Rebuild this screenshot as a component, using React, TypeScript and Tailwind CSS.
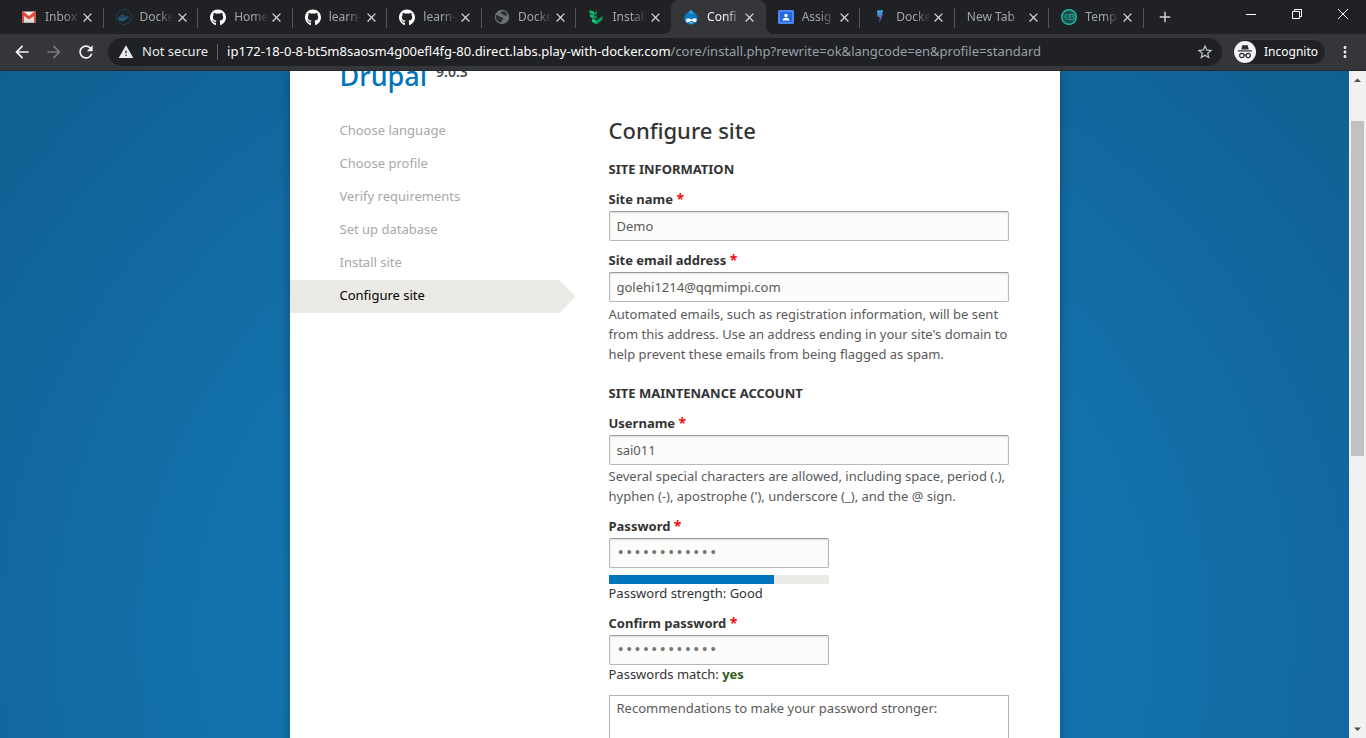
import { useState } from "react";
import type { ReactNode } from "react";
import {
  MdArrowBack,
  MdArrowForward,
  MdRefresh,
  MdWarning,
  MdStarBorder,
  MdMoreVert,
  MdClose,
  MdAdd,
} from "react-icons/md";
import { FaGithub, FaDocker } from "react-icons/fa";

function GmailIcon() {
  return (
    <svg viewBox="0 0 16 16" className="size-4">
      <path d="M1 2.500h14v11H1z" fill="#f1f1f1" />
      <path d="M3 13.500V6l5 4 5-4v7.500z" fill="#dcdcdc" />
      <path d="M1 2.500h1.500L8 7l5.500-4.500H15v3L8 10.500 1 5.500z" fill="#e0483e" />
      <path d="M1 2.500h2v11H1zM13 2.500h2v11h-2z" fill="#d54b3d" />
    </svg>
  );
}

function DockerIcon() {
  return (
    <span className="flex size-4 items-center justify-center rounded-full border border-[#1d3f54] text-[#23587a]">
      <FaDocker size={11} />
    </span>
  );
}

function GithubIcon() {
  return <FaGithub size={17} className="text-white" />;
}

function GlobeIcon() {
  return (
    <svg viewBox="0 0 16 16" className="size-4">
      <circle cx="8" cy="8" r="7.200" fill="#6b6e73" />
      <path d="M2.300 5.500c1.200.5 1.600 2 3.200 2 1.300 0 1.500 1.100 2.800 1.100 1.200 0 1.200 1.200.3 1.900-.9.600-.6 1.900-1.600 3C4.300 13.300 2 11 2 8c0-1 .1-1.800.3-2.500z" fill="#2a2c2f" />
      <path d="M8.500 2.300c-.9.600-1.700 1-1.500 1.900.2.900 1.900.6 2.300 1.500.4.800 1.500 1.200 2.500.7.600-.3 1.200-.2 1.800.3C13.200 4.200 11 2.300 8.500 2.300z" fill="#2a2c2f" />
    </svg>
  );
}

function SproutIcon() {
  return (
    <svg viewBox="0 0 16 16" className="size-4">
      <path d="M1.500 1 6 2.500v3.500L1.500 4z" fill="#0fb96c" />
      <path d="M6 3.500 9 2v3L6 6.500z" fill="#0a8a52" />
      <path d="M2 5 6.500 6.500v3.500L2 8z" fill="#0fb96c" />
      <path d="M6.500 7.500 9 6.300v3L6.500 10.500z" fill="#0a8a52" />
      <path d="M4 9.500l4.700 2V15.500L4 12.800z" fill="#12c977" />
      <path d="M8.700 11.200 14.500 7v3.500L8.700 15.500z" fill="#0a9a5b" />
    </svg>
  );
}

function DrupalIcon() {
  return (
    <svg viewBox="0 0 16 16" className="size-4">
      <path d="M8 .5C8.800 2 10 2.700 11.400 3.700 13.500 5.200 14.800 7 14.800 9.300 14.800 13 11.800 15.600 8 15.600S1.200 13 1.200 9.300C1.200 7 2.600 5 4.600 3.700 6 2.800 7.300 2 8 .5z" fill="#0b7bc1" />
      <path d="M8 .5C8.800 2 10 2.700 11.400 3.700L8 5 4.600 3.700C6 2.800 7.300 2 8 .5z" fill="#2f97d3" />
      <path d="M5.200 9.200c1.600 0 2.300 1.300 3.200 1.300s1.800-1.200 3.200-1.200c1.300 0 2 .9 2 2 0 1.200-.8 1.900-1.700 1.900-1.300 0-2.200-1.400-3.300-1.400-1 0-2 1.600-3.600 1.600-1.200 0-2.100-.8-2.100-2s.9-2.200 2.300-2.200z" fill="#fff" />
      <path d="M6.500 13.800c1-.8 2.500-.8 3.500 0-1 .7-2.500.8-3.500 0z" fill="#fff" />
    </svg>
  );
}

function ClassroomIcon() {
  return (
    <svg viewBox="0 0 16 16" className="size-4">
      <rect y="1" width="16" height="14" rx="1.500" fill="#4a87f2" />
      <rect x="2" y="3" width="12" height="10" fill="#2466dc" />
      <circle cx="8" cy="6.500" r="1.700" fill="#fff" />
      <path d="M4.500 11.500c0-1.800 1.700-2.700 3.500-2.700s3.500.9 3.500 2.700z" fill="#fff" />
    </svg>
  );
}

function BoltIcon() {
  return (
    <svg viewBox="0 0 16 16" className="size-4">
      <defs>
        <linearGradient id="bolt" x1="0" y1="0" x2="0" y2="1">
          <stop offset="0" stopColor="#35b4ea" />
          <stop offset=".5" stopColor="#5872b4" />
          <stop offset="1" stopColor="#5b3a86" />
        </linearGradient>
      </defs>
      <path d="M5 1.500 11 1 10.200 5.500 10.600 6 7.300 14.500 7.500 8 5.300 7.500z" fill="url(#bolt)" />
    </svg>
  );
}

function TempMailIcon() {
  return (
    <svg viewBox="0 0 16 16" className="size-4" fill="none">
      <circle cx="8" cy="8" r="7.300" fill="#214a4e" stroke="#17c3a1" strokeWidth="1.400" />
      <path d="M3.500 6h3M2.700 8H6M3.500 10h3M8 5.500h5v5H8zM8 6l2.500 2.200L13 6" stroke="#1fa38f" strokeWidth="1" />
    </svg>
  );
}

function IncognitoIcon() {
  return (
    <svg viewBox="0 0 22 22" className="size-[22px]">
      <circle cx="11" cy="11" r="11" fill="#f1f3f4" />
      <path d="M7.200 8.500 8.300 4.600c.1-.5.600-.7 1-.5l1.700.5 1.700-.5c.4-.2.9 0 1 .5l1.100 3.900z" fill="#2b2c2f" />
      <path d="M4 9.300h14v1.200H4z" fill="#2b2c2f" />
      <g fill="none" stroke="#2b2c2f" strokeWidth="1.200">
        <circle cx="7.800" cy="14.500" r="2.200" />
        <circle cx="14.200" cy="14.500" r="2.200" />
        <path d="M10 14.200c.6-.4 1.400-.4 2 0" />
      </g>
    </svg>
  );
}

type Tab = { title: string; icon?: ReactNode; active?: boolean; divider?: boolean };

const tabs: Tab[] = [
  { title: "Inbox", icon: <GmailIcon />, divider: true },
  { title: "Docke", icon: <DockerIcon />, divider: true },
  { title: "Home", icon: <GithubIcon />, divider: true },
  { title: "learn-", icon: <GithubIcon />, divider: true },
  { title: "learn-", icon: <GithubIcon />, divider: true },
  { title: "Docke", icon: <GlobeIcon />, divider: true },
  { title: "Install", icon: <SproutIcon /> },
  { title: "Confi", icon: <DrupalIcon />, active: true },
  { title: "Assig", icon: <ClassroomIcon />, divider: true },
  { title: "Docke", icon: <BoltIcon />, divider: true },
  { title: "New Tab", divider: true },
  { title: "Temp", icon: <TempMailIcon />, divider: true },
];

function BrowserTab({ tab }: { tab: Tab }) {
  return (
    <div
      className={
        tab.active
          ? "relative flex h-full min-w-0 flex-1 items-center rounded-t-lg bg-[#35363a] pr-2 pl-3 text-[#f1f3f4] before:absolute before:bottom-0 before:-left-2 before:size-2 before:bg-[radial-gradient(circle_at_0_0,transparent_8px,#35363a_8px)] after:absolute after:-right-2 after:bottom-0 after:size-2 after:bg-[radial-gradient(circle_at_100%_0,transparent_8px,#35363a_8px)]"
          : "relative flex h-full min-w-0 flex-1 items-center pr-2 pl-3 text-[#a3a6aa]"
      }
    >
      {tab.icon && <span className="mr-2 flex size-4 shrink-0 items-center justify-center">{tab.icon}</span>}
      <a
        href="#"
        className="min-w-0 flex-1 text-xs whitespace-nowrap [mask-image:linear-gradient(to_right,black_calc(100%-16px),transparent)]"
      >
        {tab.title}
      </a>
      <button type="button" aria-label="Close tab" className="flex size-4 shrink-0 items-center justify-center text-[#d0d2d5]">
        <MdClose size={15} />
      </button>
      {tab.divider && <span className="absolute top-2 right-0 h-5 w-px bg-[#55575b]" />}
    </div>
  );
}

function WindowControls() {
  return (
    <div className="flex h-7 text-white">
      <button type="button" aria-label="Minimize" className="flex w-[46px] items-center justify-center">
        <svg viewBox="0 0 10 10" className="size-[10px]" stroke="currentColor" fill="none">
          <path d="M0 5.500h10" />
        </svg>
      </button>
      <button type="button" aria-label="Restore" className="flex w-[46px] items-center justify-center">
        <svg viewBox="0 0 10 10" className="size-[10px]" stroke="currentColor" fill="none">
          <path d="M.5 2.500h7v7h-7zM2.500 2.500v-2h7v7h-2" />
        </svg>
      </button>
      <button type="button" aria-label="Close" className="flex w-[46px] items-center justify-center">
        <svg viewBox="0 0 10 10" className="size-[10px]" stroke="currentColor" fill="none">
          <path d="M0 0l10 10M10 0 0 10" />
        </svg>
      </button>
    </div>
  );
}

function BrowserChrome() {
  return (
    <header className="shrink-0 font-['Noto_Sans',sans-serif]">
      <div className="flex h-[34px] bg-[#202124] pl-[9px]">
        <nav aria-label="Tabs" className="flex max-w-[1135px] flex-1">
          {tabs.map((tab, i) => (
            <BrowserTab key={i} tab={tab} />
          ))}
        </nav>
        <button type="button" aria-label="New tab" className="ml-[11px] flex w-5 items-center justify-center text-[#d0d2d5]">
          <MdAdd size={18} />
        </button>
        <div className="ml-auto">
          <WindowControls />
        </div>
      </div>
      <div className="flex h-[37px] items-center border-b border-[#28292c] bg-[#35363a] px-3">
        <div className="flex w-24 shrink-0 items-center gap-3 text-[#f1f3f4]">
          <button type="button" aria-label="Back"><MdArrowBack size={20} /></button>
          <button type="button" aria-label="Forward" className="text-[#77797d]"><MdArrowForward size={20} /></button>
          <button type="button" aria-label="Reload"><MdRefresh size={20} /></button>
        </div>
        <div className="flex h-7 min-w-0 flex-1 items-center rounded-full bg-[#202124] pr-2 pl-[10px]">
          <MdWarning size={16} className="shrink-0 text-[#e8eaed]" />
          <span className="ml-2 text-[13px] whitespace-nowrap text-[#e8eaed]">Not secure</span>
          <span className="mx-[9px] h-4 w-px bg-[#5f6368]" />
          <span className="min-w-0 flex-1 overflow-hidden text-[13px] whitespace-nowrap text-[#9aa0a6]">
            <span className="text-white">ip172-18-0-8-bt5m8saosm4g00efl4fg-80.direct.labs.play-with-docker.com</span>
            /core/install.php?rewrite=ok&amp;langcode=en&amp;profile=standard
          </span>
          <button type="button" aria-label="Bookmark" className="text-[#c4c7ca]"><MdStarBorder size={18} /></button>
        </div>
        <div className="ml-[10px] flex h-[26px] items-center gap-2 rounded-full border border-[#3c3d41] bg-[#202124] pr-[7px] pl-px text-xs text-white">
          <IncognitoIcon />
          Incognito
        </div>
        <button type="button" aria-label="Menu" className="ml-[10px] text-[#e8eaed]"><MdMoreVert size={18} /></button>
      </div>
    </header>
  );
}

const steps = ["Choose language", "Choose profile", "Verify requirements", "Set up database", "Install site"];

function Steps() {
  return (
    <ol className="w-[286px] text-[13px] leading-[31px] text-[#a8a8a8]">
      {steps.map((step) => (
        <li key={step} className="pb-[2px] pl-[50px]">{step}</li>
      ))}
      <li aria-current="step" className="bg-[#ebeae4] pb-[2px] pl-[50px] text-black [clip-path:polygon(0_0,calc(100%-16px)_0,100%_50%,calc(100%-16px)_100%,0_100%)]">
        Configure site
      </li>
    </ol>
  );
}

type FieldProps = {
  id: string;
  label: string;
  type?: string;
  initial: string;
  narrow?: boolean;
};

function Field({ id, label, type = "text", initial, narrow }: FieldProps) {
  const [value, setValue] = useState(initial);
  return (
    <>
      <label htmlFor={id} className="block h-[23px] text-[13px] leading-[22px] font-bold text-[#333]">
        {label} <span className="text-sm leading-none text-[#e11]">*</span>
      </label>
      <input
        id={id}
        type={type}
        value={value}
        onChange={(e) => setValue(e.target.value)}
        className={
          narrow
            ? "block h-[30px] w-[220px] rounded-[2px] border border-[#b8b8b8] border-t-[#999] bg-[#fcfcfa] px-[7px] font-['Liberation_Mono',monospace] text-sm text-[#777] shadow-[inset_0_1px_2px_rgba(0,0,0,0.125)] outline-none"
            : "block h-[30px] w-full rounded-[2px] border border-[#b8b8b8] border-t-[#999] bg-[#fcfcfa] px-[7px] text-[13px] text-[#595959] shadow-[inset_0_1px_2px_rgba(0,0,0,0.125)] outline-none"
        }
      />
    </>
  );
}

function InstallerForm() {
  return (
    <main className="w-[400px] text-[#333]">
      <h2 className="text-[22px] leading-[30px] font-medium">Configure site</h2>
      <form>
        <fieldset className="pt-[15px]">
          <legend className="float-left h-[18px] w-full text-[13px] leading-[18px] font-bold">SITE INFORMATION</legend>
          <div className="clear-both pt-[10px]">
            <Field id="site-name" label="Site name" initial="Demo" />
          </div>
          <div className="mt-2">
            <Field id="site-mail" label="Site email address" initial="golehi1214@qqmimpi.com" />
            <p className="mt-[2px] text-[13px] leading-5 text-[#5a5a5a]">
              Automated emails, such as registration information, will be sent from this address. Use an address ending in your site's domain to help prevent these emails from being flagged as spam.
            </p>
          </div>
        </fieldset>
        <fieldset className="pt-5">
          <legend className="float-left h-[18px] w-full text-[13px] leading-[18px] font-bold">SITE MAINTENANCE ACCOUNT</legend>
          <div className="clear-both pt-[10px]">
            <Field id="account-name" label="Username" initial="sai011" />
            <p className="mt-px text-[13px] leading-5 text-[#5a5a5a]">
              Several special characters are allowed, including space, period (.), hyphen (-), apostrophe ('), underscore (_), and the @ sign.
            </p>
          </div>
          <div className="mt-[9px]">
            <Field id="pass1" label="Password" type="password" initial="correcthorse" narrow />
            <div className="mt-[7px] h-[9px] w-[220px] bg-[#ebeae4]">
              <div className="h-full w-3/4 bg-[#0074bd]" />
            </div>
            <div className="text-[13px] leading-[18px]">Password strength: Good</div>
          </div>
          <div className="mt-[10px]">
            <Field id="pass2" label="Confirm password" type="password" initial="correcthorse" narrow />
            <div className="text-[13px] leading-[18px]">
              Passwords match: <span className="font-bold text-[#325e1c]">yes</span>
            </div>
          </div>
          <div className="mt-3 h-32 border border-[#b4b4b4] px-[7px] py-[2px] text-[13px] leading-5 text-[#5a5a5a]">
            Recommendations to make your password stronger:
          </div>
        </fieldset>
      </form>
    </main>
  );
}

function ScrollBar() {
  return (
    <div className="flex w-[17px] shrink-0 flex-col items-center bg-[#f1f1f1]">
      <svg viewBox="0 0 17 17" className="size-[17px]"><path d="M5 11h7L8.500 7.500z" fill="#505050" /></svg>
      <div className="mt-[33px] h-[335px] w-[13px] bg-[#c1c1c1]" />
      <svg viewBox="0 0 17 17" className="mt-auto size-[17px]"><path d="M5 6.500h7L8.500 10z" fill="#505050" /></svg>
    </div>
  );
}

export default function App() {
  return (
    <div className="flex h-screen flex-col overflow-hidden">
      <BrowserChrome />
      <div className="flex min-h-0 flex-1">
        <div className="flex min-w-0 flex-1 items-start justify-center overflow-hidden bg-[radial-gradient(954px_891px_at_50%_564px,hsl(203,80%,43%),hsl(203,80%,31%))] font-['Noto_Sans',sans-serif]">
          <div className="w-[770px] bg-white pb-12 shadow-[0_0_10px_rgba(0,0,0,0.3)]">
            <div className="flex h-6 items-end gap-[9px] overflow-hidden pb-1 pl-[50px]">
              <h1 className="text-[27px] leading-[30px] font-medium text-[#0074bd]">Drupal</h1>
              <span className="mb-3 text-sm leading-none font-semibold text-[#4a4a4a]">9.0.3</span>
            </div>
            <div className="flex pt-5">
              <Steps />
              <div className="ml-[33px]">
                <InstallerForm />
              </div>
            </div>
          </div>
        </div>
        <ScrollBar />
      </div>
    </div>
  );
}
